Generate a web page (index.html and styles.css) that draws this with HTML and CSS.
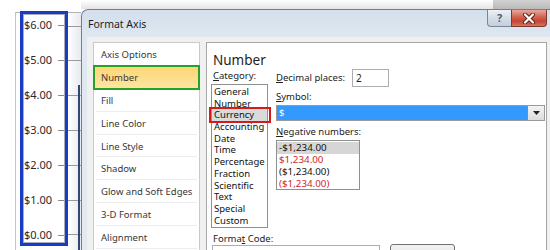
FILE: index.html
```html
<!DOCTYPE html>
<html>
<head>
<meta charset="utf-8">
<title>Format Axis</title>
<link rel="stylesheet" href="styles.css">
</head>
<body>
<div class="page">
  <div class="chart">
    <div class="plot">
      <div class="axis">
        <div class="axis-inner">
          <div class="tick-row"><span>$6.00</span><i class="tick"></i></div>
          <div class="tick-row"><span>$5.00</span><i class="tick"></i></div>
          <div class="tick-row"><span>$4.00</span><i class="tick"></i></div>
          <div class="tick-row"><span>$3.00</span><i class="tick"></i></div>
          <div class="tick-row"><span>$2.00</span><i class="tick"></i></div>
          <div class="tick-row"><span>$1.00</span><i class="tick"></i></div>
          <div class="tick-row"><span>$0.00</span><i class="tick"></i></div>
        </div>
      </div>
      <div class="grid">
        <div class="gl"><i></i></div>
        <div class="gl"><i></i></div>
        <div class="gl"><i></i></div>
        <div class="gl"><i></i></div>
        <div class="gl"><i></i></div>
        <div class="gl"><i></i></div>
        <div class="gl"><i></i></div>
      </div>
    </div>
  </div>
  <div class="right">
    <div class="top-strip"><div class="ts-a"></div><div class="ts-b"></div></div>
    <div class="dialog">
      <div class="titlebar">
        <span class="title">Format Axis</span>
        <div class="caption-btns">
          <div class="btn-help">?</div>
          <div class="btn-close">
            <svg width="14" height="11" viewBox="0 0 14 11">
              <path d="M3 1.5 L11 9.5 M11 1.5 L3 9.5" stroke="#5a2018" stroke-width="4" stroke-linecap="round"/>
              <path d="M3 1.5 L11 9.5 M11 1.5 L3 9.5" stroke="#ffffff" stroke-width="2.2" stroke-linecap="round"/>
            </svg>
          </div>
        </div>
      </div>
      <div class="client">
        <div class="nav">
          <div class="nav-item">Axis Options</div>
          <div class="nav-item active">Number</div>
          <div class="nav-item">Fill</div>
          <div class="nav-item">Line Color</div>
          <div class="nav-item">Line Style</div>
          <div class="nav-item">Shadow</div>
          <div class="nav-item">Glow and Soft Edges</div>
          <div class="nav-item">3-D Format</div>
          <div class="nav-item">Alignment</div>
        </div>
        <div class="panel">
          <div class="heading">Number</div>
          <div class="cols">
            <div class="col-left">
              <div class="label first"><u>C</u>ategory:</div>
              <div class="listbox cat">
                <div class="li">General</div>
                <div class="li">Number</div>
                <div class="li sel">Currency</div>
                <div class="li">Accounting</div>
                <div class="li">Date</div>
                <div class="li">Time</div>
                <div class="li">Percentage</div>
                <div class="li">Fraction</div>
                <div class="li">Scientific</div>
                <div class="li">Text</div>
                <div class="li">Special</div>
                <div class="li">Custom</div>
              </div>
            </div>
            <div class="col-right">
              <div class="dec-row">
                <span class="label"><u>D</u>ecimal places:</span>
                <div class="num-input">2</div>
              </div>
              <div class="label sym"><u>S</u>ymbol:</div>
              <div class="combo">
                <div class="combo-field">$</div>
                <div class="combo-btn">
                  <svg width="7" height="4" viewBox="0 0 7 4"><path d="M0 0 H7 L3.5 4 Z" fill="#222"/></svg>
                </div>
              </div>
              <div class="label neg"><u>N</u>egative numbers:</div>
              <div class="listbox negbox">
                <div class="li nsel">-$1,234.00</div>
                <div class="li red">$1,234.00</div>
                <div class="li">($1,234.00)</div>
                <div class="li red">($1,234.00)</div>
              </div>
            </div>
          </div>
          <div class="label fc">Forma<u>t</u> Code:</div>
          <div class="bottom-row">
            <div class="code-input"></div>
            <div class="push-btn"></div>
          </div>
        </div>
      </div>
    </div>
  </div>
</div>
</body>
</html>
```

FILE: styles.css
```css
* { box-sizing: border-box; margin: 0; padding: 0; }
body {
  margin: 0;
  width: 550px;
  height: 250px;
  overflow: hidden;
  background: #ffffff;
  font-family: "Noto Sans", "Open Sans", sans-serif;
  color: #222;
}
.page { display: flex; height: 250px; overflow: hidden; }

/* chart side */
.chart { width: 81px; flex-shrink: 0; padding: 12px 0 0 15px; display: flex; flex-direction: column; }
.plot {
  flex: 1;
  display: flex;
  border-left: 1px solid #c4c4c4;
  border-top: 1px solid #b4b4b4;
  padding-left: 4px;
}
.axis {
  width: 48px;
  height: 235px;
  flex-shrink: 0;
  margin-top: -2px;
  border: 3px solid #1a3cc4;
}
.axis-inner {
  height: 100%;
  border: 1px solid #a9abbb;
  display: flex;
  flex-direction: column;
  justify-content: space-between;
  padding-top: 3px;
}
.tick-row {
  display: flex;
  align-items: center;
  height: 14px;
  line-height: 14px;
  font-size: 11px;
  color: #2a2a2a;
}
.tick { margin-left: auto; width: 6px; height: 1px; background: #8a8a8a; }
.grid {
  flex: 1;
  position: relative;
  display: flex;
  flex-direction: column;
  justify-content: space-between;
  padding: 6px 0 8px 0;
  background: linear-gradient(90deg, #ffffff, #e6e9ee);
}
.gl { height: 14px; display: flex; align-items: center; }
.gl i { flex: 1; height: 1px; background: #9a9a9a; }
.grid::after {
  content: "";
  position: absolute;
  right: 1px;
  top: 72px;
  bottom: 0;
  width: 2px;
  background: #34466e;
}

/* dialog */
.right { width: 469px; flex-shrink: 0; display: flex; flex-direction: column; overflow: hidden; }
.top-strip { height: 9px; flex-shrink: 0; display: flex; }
.ts-a { flex: 1; background: linear-gradient(#ffffff, #e4e4e4); }
.ts-b { width: 57px; background: linear-gradient(#d2d2d2, #b9b9b9); }
.dialog {
  flex: 1;
  min-height: 0;
  overflow: hidden;
  display: flex;
  flex-direction: column;
  border-top: 1px solid #6d7f99;
  border-left: 1px solid #6d7f99;
  border-radius: 7px 0 0 0;
  background: linear-gradient(#d3dfec, #dfe8f1 28px, #e3eaf2);
}
.titlebar { height: 27px; flex-shrink: 0; display: flex; align-items: flex-start; }
.title {
  padding: 7px 0 0 6px;
  font-size: 10.5px;
  line-height: 14px;
  color: #1e1e1e;
}
.caption-btns { margin-left: auto; margin-right: 3px; display: flex; }
.btn-help {
  width: 24px;
  height: 17px;
  border: 1px solid #7a8696;
  border-top: none;
  border-right: none;
  border-radius: 0 0 0 4px;
  background: linear-gradient(#eef2f6, #d5dde6 50%, #c4cfdb);
  font-size: 11px;
  font-weight: bold;
  line-height: 16px;
  text-align: center;
  color: #4e5c70;
}
.btn-close {
  width: 36px;
  height: 17px;
  border: 1px solid #7a3a32;
  border-top: none;
  border-radius: 0 0 4px 0;
  background: linear-gradient(#e9a89a, #cf5a48 50%, #c44536 70%, #d9735f);
  display: flex;
  align-items: center;
  justify-content: center;
}
.client {
  flex: 1;
  min-height: 0;
  margin-left: 5px;
  background: #f0f0f0;
  display: flex;
  gap: 6px;
  padding: 5px 3px 0 6px;
}

/* left nav */
.nav {
  width: 107px;
  flex-shrink: 0;
  background: #ffffff;
  border: 1px solid #c9c9c9;
  border-bottom: none;
}
.nav-item {
  height: 22.9px;
  line-height: 23px;
  margin: 0 2px;
  padding-left: 5px;
  font-size: 9.5px;
  color: #383838;
  border-bottom: 1px solid #ececec;
}
.nav-item.active {
  margin: 0;
  padding-left: 7px;
  border-bottom: none;
  background: linear-gradient(#fcd574, #fde6a2);
  outline: 2px solid #27a127;
  outline-offset: -1px;
}

/* right panel */
.panel {
  flex: 1;
  background: #ffffff;
  border: 1px solid #a6a6a6;
  border-bottom: none;
  padding-left: 4px;
}
.heading {
  margin: 8px 0 0 2px;
  font-size: 13.5px;
  line-height: 18px;
  color: #1e1e1e;
}
.cols { display: flex; }
.label { font-size: 9.5px; line-height: 12px; color: #222; }
.label u { text-decoration: underline; }
.label.first { padding: 1px 0 0 2px; }
.listbox {
  background: #fff;
  border: 1px solid #8e8f8f;
  font-size: 9.5px;
}
.listbox.cat { width: 57px; height: 144px; margin-top: 2px; padding-top: 1px; }
.li { height: 11.7px; line-height: 11.7px; padding-left: 2px; white-space: nowrap; color: #111; }
.li.sel { position: relative; background: #dadada; }
.li.sel::after {
  content: "";
  position: absolute;
  left: -3px;
  right: -4px;
  top: -2px;
  bottom: -2px;
  border: 2px solid #d41a1a;
}
.col-right { flex: 1; margin-left: 8px; display: flex; flex-direction: column; }
.dec-row { height: 18px; display: flex; align-items: center; }
.num-input {
  margin-left: 7px;
  width: 37px;
  height: 18px;
  border: 1px solid #abadb3;
  font-size: 10px;
  line-height: 16px;
  padding-left: 3px;
}
.label.sym { margin-top: 4px; }
.combo { margin: 2px 1px 0 0; height: 16px; display: flex; border: 1px solid #9a9a9a; }
.combo-field {
  flex: 1;
  background: #3399ff;
  color: #fff;
  font-size: 9.5px;
  line-height: 14px;
  padding-left: 2px;
}
.combo-btn {
  width: 17px;
  border-left: 1px solid #8a8a8a;
  background: linear-gradient(#f4f4f4, #dcdcdc);
  display: flex;
  align-items: center;
  justify-content: center;
}
.label.neg { margin-top: 5px; }
.negbox { width: 84px; height: 50px; margin-top: 2px; padding-top: 1px; font-size: 9.8px; }
.negbox .li { height: 12px; line-height: 12px; }
.li.nsel { background: #d6d6d6; }
.li.red { color: #cc2a2a; }
.label.fc { margin: 5px 0 0 2px; }
.bottom-row { display: flex; gap: 10px; }
.code-input {
  margin-left: 1px;
  width: 168px;
  height: 20px;
  border: 1px solid #abadb3;
  background: #fff;
}
.push-btn {
  width: 65px;
  height: 20px;
  margin-top: -1px;
  border: 1px solid #707070;
  border-radius: 3px;
  background: linear-gradient(#f2f2f2, #e2e2e2);
}
```
